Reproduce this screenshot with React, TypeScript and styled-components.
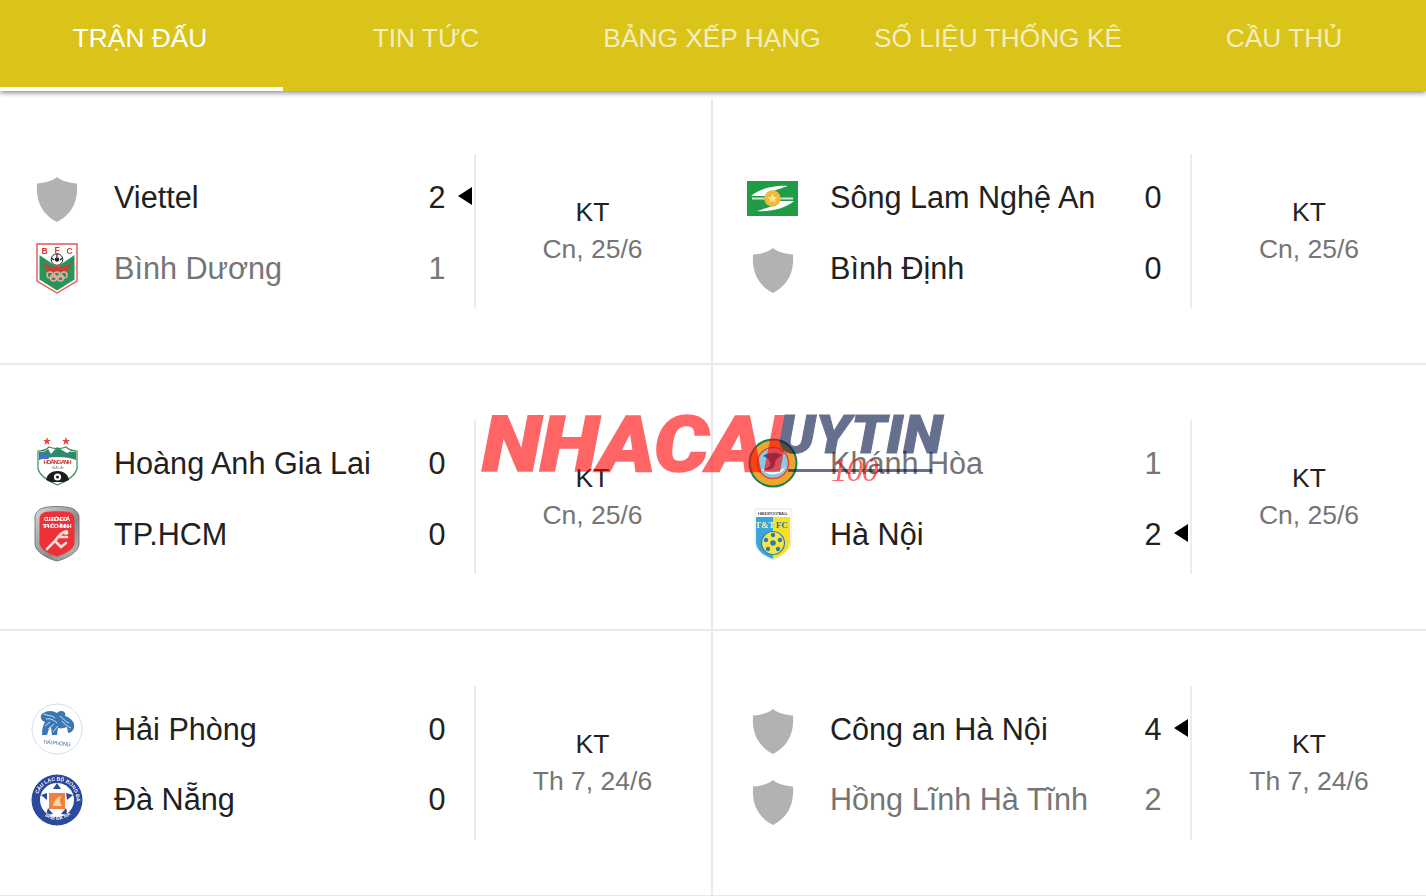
import React from "react";
import styled, { createGlobalStyle } from "styled-components";

const Global = createGlobalStyle`
  html, body { margin: 0; padding: 0; background: #fff; overflow: hidden; width: 1426px; height: 896px; }
  body { font-family: "Liberation Sans", Arial, sans-serif; color: #212121; }
  #root { position: relative; width: 1426px; height: 896px; overflow: hidden; }
`;

const TabBar = styled.nav`
  position: relative;
  z-index: 2;
  height: 91px;
  background: #dac41a;
  box-shadow: 0 2px 5px rgba(0, 0, 0, 0.45);
  overflow: hidden;
`;
const TabList = styled.div`
  display: grid;
  grid-template-columns: repeat(5, 286px);
  margin-left: -3px;
  height: 100%;
`;
const Tab = styled.div<{ $active?: boolean }>`
  display: flex;
  align-items: center;
  justify-content: center;
  box-sizing: border-box;
  padding-bottom: 10px;
  font-size: 26.3px;
  white-space: nowrap;
  color: ${(p) => (p.$active ? "#fff" : "rgba(255,255,255,0.72)")};
  border-bottom: 4px solid ${(p) => (p.$active ? "#fff" : "transparent")};
`;
const MatchGrid = styled.main`
  display: grid;
  grid-template-columns: 713px 713px;
  grid-auto-rows: 265.9px;
  padding-top: 8px;
`;
const MatchCell = styled.section<{ $right?: boolean }>`
  display: flex;
  box-sizing: border-box;
  padding-top: 55px;
  padding-left: ${(p) => (p.$right ? "3px" : "0")};
  border-bottom: 2px solid #e9e9e9;
  border-right: ${(p) => (p.$right ? "none" : "2px solid #e9e9e9")};
`;
const Teams = styled.div`
  box-sizing: border-box;
  flex: none;
  width: 476px;
  height: 154px;
  padding-top: 7.95px;
  border-right: 2px solid #ececec;
`;
const TeamRow = styled.div<{ $dim?: boolean }>`
  display: grid;
  grid-template-columns: 114px 306px 34px 20px;
  align-items: center;
  height: 70.8px;
  font-size: 30.6px;
  color: ${(p) => (p.$dim ? "#757575" : "#212121")};
`;
const LogoSlot = styled.div`
  display: flex;
  align-items: center;
  justify-content: center;
  height: 100%;
  svg {
    filter: blur(0.35px);
  }
`;
const ShieldMark = styled.svg`
  margin-top: 5px;
`;
const TeamName = styled.div`
  white-space: nowrap;
`;
const Score = styled.div`
  text-align: center;
`;
const WinMark = styled.div`
  justify-self: end;
  width: 0;
  height: 0;
  margin: 0 2px 3px 0;
  border-top: 9px solid transparent;
  border-bottom: 9px solid transparent;
  border-right: 14px solid #000;
`;
const Status = styled.div<{ $right?: boolean }>`
  flex: 1;
  display: flex;
  flex-direction: column;
  align-items: center;
  box-sizing: border-box;
  padding: 40px ${(p) => (p.$right ? "0" : "2px")} 0 0;
  font-size: 26.5px;
  line-height: 37px;
  color: #212121;
  white-space: nowrap;
`;
const DateText = styled.div`
  color: #757575;
`;
const Watermark = styled.div`
  position: absolute;
  left: 482px;
  top: 400px;
  width: 470px;
  height: 90px;
  opacity: 0.6;
  pointer-events: none;
  z-index: 3;
`;
const WmRed = styled.span`
  position: absolute;
  left: 0;
  top: 0;
  font-family: Roboto, "Liberation Sans", sans-serif;
  font-style: italic;
  font-weight: 900;
  font-size: 78px;
  line-height: 90px;
  color: #f00;
  -webkit-text-stroke: 1.5px #f00;
  transform: scaleX(1.11);
  transform-origin: left center;
  letter-spacing: -1px;
`;
const WmNavy = styled.span`
  position: absolute;
  left: 296px;
  top: 4px;
  font-family: Roboto, "Liberation Sans", sans-serif;
  font-style: italic;
  font-weight: 900;
  font-size: 53px;
  line-height: 62px;
  color: #014;
  -webkit-text-stroke: 1px #014;
  transform: scaleX(1.09);
  transform-origin: left center;
`;
const WmLine = styled.i`
  position: absolute;
  left: 306px;
  top: 69px;
  width: 144px;
  height: 3px;
  background: #014;
`;
const WmHundred = styled.span`
  position: absolute;
  left: 349px;
  top: 54px;
  font-family: "Liberation Serif", serif;
  font-style: italic;
  font-size: 33px;
  line-height: 33px;
  color: #f00;
  letter-spacing: -1px;
`;

const Shield = () => (
  <ShieldMark width="42" height="45" viewBox="0 0 42 45">
    <path d="M21 0C26 4 33 6 41 6.5C42 22 38 36 21 45C4 36 0 22 1 6.5C9 6 16 4 21 0Z" fill="#b2b2b2" />
  </ShieldMark>
);
const Bec = () => (
  <svg width="42" height="51" viewBox="0 0 42 51" style={{ marginTop: 1 }}>
    <path d="M1 1H41V38L21 50L1 38Z" fill="#fff" stroke="#e4574f" strokeWidth="1.4" />
    <path d="M3.5 12L21 24L38.5 12V36.5L21 47.5L3.5 36.5Z" fill="#2a9458" />
    <path d="M6 20L15 24L21 23L27 24L36 20L31 28L21 29L11 28Z" fill="#c8403a" />
    <g fill="none" stroke="#f0a9a0" strokeWidth="1.5">
      <circle cx="14" cy="32" r="3" />
      <circle cx="21" cy="32" r="3" />
      <circle cx="28" cy="32" r="3" />
      <circle cx="17.5" cy="35" r="3" />
      <circle cx="24.5" cy="35" r="3" />
    </g>
    <circle cx="21" cy="16.5" r="5.8" fill="#fff" stroke="#222" strokeWidth="1" />
    <circle cx="21" cy="16.5" r="2.2" fill="#222" />
    <path d="M15.5 15L18 17M26.5 15L24 17M21 11V14" stroke="#222" strokeWidth="1.2" />
    <text x="8.5" y="10.5" textAnchor="middle" fontFamily="Liberation Sans" fontWeight="700" fontSize="8.5" fill="#d7362f">B</text>
    <text x="21" y="10" textAnchor="middle" fontFamily="Liberation Sans" fontWeight="700" fontSize="8.5" fill="#d7362f">F</text>
    <text x="33.5" y="10.5" textAnchor="middle" fontFamily="Liberation Sans" fontWeight="700" fontSize="8.5" fill="#d7362f">C</text>
  </svg>
);
const Slna = () => (
  <svg width="51" height="35" viewBox="0 0 51 35" style={{ marginTop: 2, marginLeft: -2 }}>
    <rect width="51" height="35" fill="#1f9c45" />
    <path d="M4 15C13 7 29 4 41 5C32 8 23 10 18 15Z" fill="#fff" />
    <path d="M47 20C38 28 22 31 10 30C19 27 28 25 33 20Z" fill="#fff" />
    <rect x="5" y="16.5" width="41" height="2" fill="#cfe6d2" />
    <circle cx="25.5" cy="17.5" r="8.3" fill="#f0b93a" />
    <path d="M25.5 12.5L27 16H30.5L27.8 18.3L29 22L25.5 19.8L22 22L23.2 18.3L20.5 16H24Z" fill="#fbe58a" />
  </svg>
);
const Hagl = () => (
  <svg width="41" height="50" viewBox="0 0 41 50" style={{ marginTop: -4 }}>
    <path d="M10 1L11 4H14L11.6 5.8L12.5 9L10 7L7.5 9L8.4 5.8L6 4H9Z" fill="#e2463f" />
    <path d="M29 1L30 4H33L30.6 5.8L31.5 9L29 7L26.5 9L27.4 5.8L25 4H28Z" fill="#e2463f" />
    <path d="M1 15C6 15 9 14 12 11C17 13 24 13 29 11C32 14 35 15 40 15V33C38 40 30 45 20.5 49C11 45 3 40 1 33Z" fill="#fff" stroke="#3a8a58" strokeWidth="1.2" />
    <path d="M2 24V16C5 16 8 16 11 13L14 18L20 11L30 17L33 15.5C35 16 37 16 39 16V24C30 20 12 20 2 24Z" fill="#2f8a6a" />
    <path d="M3 17H10L12 23H3Z" fill="#3f74c4" />
    <text x="20.5" y="28" textAnchor="middle" fontFamily="Liberation Sans" fontWeight="700" fontSize="6" fill="#c9332f" textLength="28">HOÀNG ANH</text>
    <text x="20.5" y="33" textAnchor="middle" fontFamily="Liberation Sans" fontSize="3.6" fill="#777" textLength="12">GIA LAI</text>
    <path d="M9 44C10 38 15 35 20.5 35C26 35 31 38 32 44L27 46H14Z" fill="#1c1c1c" />
    <circle cx="20.5" cy="41" r="3.6" fill="#fff" />
    <circle cx="20.5" cy="41" r="1.5" fill="#1c1c1c" />
  </svg>
);
const Hcm = () => (
  <svg width="46" height="56" viewBox="0 0 46 56" style={{ marginTop: -1 }}>
    <defs>
      <linearGradient id="hcm-edge" x1="0" y1="0" x2="1" y2="1">
        <stop offset="0" stopColor="#d8d8d8" />
        <stop offset="0.6" stopColor="#8a8a8a" />
        <stop offset="1" stopColor="#c4c4c4" />
      </linearGradient>
    </defs>
    <path d="M9 2C16 0 30 0 37 2C41 3 45 7 45 11V38C45 46 32 53 23 55C14 53 1 46 1 38V11C1 7 5 3 9 2Z" fill="url(#hcm-edge)" stroke="#666" strokeWidth="0.8" />
    <path d="M11 6C17 5 29 5 35 6C38 7 40 9 40.5 12V37C40.5 43 30 48.5 23 50.5C16 48.5 5.5 43 5.5 37V12C6 9 8 7 11 6Z" fill="#ec3238" />
    <text x="23" y="14.5" textAnchor="middle" fontFamily="Liberation Sans" fontWeight="700" fontSize="5.6" fill="#fff" textLength="26">CLB BÓNG ĐÁ</text>
    <text x="23" y="21.5" textAnchor="middle" fontFamily="Liberation Sans" fontWeight="700" fontSize="5.6" fill="#fff" textLength="29">TP HỒ CHÍ MINH</text>
    <path d="M30 26C26 28 23 32 21 35L13 43M21 35L27 41L32 37M24 31L33 31" fill="none" stroke="#fbdcdc" strokeWidth="2.6" strokeLinecap="round" />
    <circle cx="32" cy="26.5" r="2.4" fill="#fbdcdc" />
  </svg>
);
const KhanhHoa = () => (
  <svg width="50" height="50" viewBox="0 0 50 50">
    <circle cx="25" cy="25" r="24.5" fill="#17805c" />
    <circle cx="25" cy="25" r="22.5" fill="#f0a62b" />
    <circle cx="25" cy="25" r="15.5" fill="#8cc8e0" stroke="#e2463f" strokeWidth="1.5" />
    <path d="M15 18C21 14 29 14 34 17C30 20 27 22 27 25C27 30 21 33 16 31C21 30 23 27 22 24C21 21 18 19 15 18Z" fill="#1d5aa5" />
    <path d="M13 30C20 36 30 36 37 29C34 38 18 39 13 30Z" fill="#fff" />
  </svg>
);
const HaNoi = () => (
  <svg width="38" height="53" viewBox="0 0 38 53">
    <path d="M1 1H37V34C37 43 28 49 19 52C10 49 1 43 1 34Z" fill="#fff" stroke="#e6e6e6" />
    <text x="19" y="7" textAnchor="middle" fontFamily="Liberation Sans" fontWeight="700" fontSize="4" fill="#555" textLength="30">HANOI FOOTBALL</text>
    <path d="M2 9H19V51C10 48 2 42 2 34Z" fill="#3aa6dc" />
    <path d="M19 9H36V34C36 42 28 48 19 51Z" fill="#f7df27" />
    <text x="11" y="20" textAnchor="middle" fontFamily="Liberation Serif" fontWeight="700" fontSize="9" fill="#fdf3a8">T&amp;T</text>
    <text x="28" y="20" textAnchor="middle" fontFamily="Liberation Serif" fontWeight="700" fontSize="9" fill="#2b6fa8">FC</text>
    <circle cx="19" cy="35" r="11.5" fill="#f7e34a" stroke="#2a7fae" strokeWidth="1.2" />
    <g fill="#2a7fae">
      <circle cx="19" cy="35" r="2.8" />
      <circle cx="19" cy="27" r="2.2" />
      <circle cx="12" cy="32" r="2.2" />
      <circle cx="26" cy="32" r="2.2" />
      <circle cx="14" cy="41" r="2.2" />
      <circle cx="24" cy="41" r="2.2" />
    </g>
  </svg>
);
const HaiPhong = () => (
  <svg width="52" height="52" viewBox="0 0 52 52">
    <circle cx="26" cy="26" r="25" fill="#fff" stroke="#d5dcee" />
    <path d="M10 12C14 7 22 7 26 10C30 6 36 9 34 13C38 14 42 17 43 21C44 27 40 30 37 30L36 24C33 25 30 26 27 25L26 32H21L20 24C18 25 17 29 16 32H11C11 26 12 22 14 19C11 18 9 15 10 12Z" fill="#3a78b5" />
    <path d="M13 11C17 13 21 12 24 15M15 16C19 15 23 17 26 20M29 13C32 15 34 19 38 20M31 18C33 21 36 23 40 25M14 23L19 19M17 26L23 21M22 29L27 23" fill="none" stroke="#cfe0f0" strokeWidth="1" />
    <text x="26" y="42" textAnchor="middle" fontFamily="Liberation Sans" fontSize="5.5" fill="#4a6d9c" textLength="27" transform="rotate(6 26 42)">HẢI PHÒNG</text>
  </svg>
);
const DaNang = () => (
  <svg width="52" height="52" viewBox="0 0 52 52">
    <circle cx="26" cy="26" r="25.5" fill="#2c4a9c" />
    <circle cx="26" cy="26" r="17" fill="#fff" />
    <path d="M26 9L30 15H22ZM42 21L36 26L35 19ZM10 21L16 19L16 26ZM15 41L17 34L22 40ZM37 41L30 40L35 34Z" fill="#2c4a9c" />
    <rect x="18" y="19" width="16" height="16" fill="#f0813a" />
    <path d="M22 32C23 27 25 24 30 22C28 26 29 29 31 32Z" fill="#fbd3a6" />
    <path id="dn-arc" d="M6.5 26A19.5 19.5 0 0 1 45.5 26" fill="none" />
    <text fontFamily="Liberation Sans" fontWeight="700" fontSize="5" fill="#fff"><textPath href="#dn-arc" startOffset="6">CÂU LẠC BỘ BÓNG ĐÁ</textPath></text>
    <path id="dn-arc2" d="M11 39A20 20 0 0 0 41 39" fill="none" />
    <text fontFamily="Liberation Sans" fontWeight="700" fontSize="5" fill="#fff"><textPath href="#dn-arc2" startOffset="4">SHB ĐÀ NẴNG</textPath></text>
  </svg>
);

type Side = { name: string; score: number; logo: React.ReactNode; dim?: boolean; win?: boolean };
type Match = { date: string; a: Side; b: Side };

const matches: Match[] = [
  { date: "Cn, 25/6", a: { name: "Viettel", score: 2, logo: <Shield />, win: true }, b: { name: "Bình Dương", score: 1, logo: <Bec />, dim: true } },
  { date: "Cn, 25/6", a: { name: "Sông Lam Nghệ An", score: 0, logo: <Slna /> }, b: { name: "Bình Định", score: 0, logo: <Shield /> } },
  { date: "Cn, 25/6", a: { name: "Hoàng Anh Gia Lai", score: 0, logo: <Hagl /> }, b: { name: "TP.HCM", score: 0, logo: <Hcm /> } },
  { date: "Cn, 25/6", a: { name: "Khánh Hòa", score: 1, logo: <KhanhHoa />, dim: true }, b: { name: "Hà Nội", score: 2, logo: <HaNoi />, win: true } },
  { date: "Th 7, 24/6", a: { name: "Hải Phòng", score: 0, logo: <HaiPhong /> }, b: { name: "Đà Nẵng", score: 0, logo: <DaNang /> } },
  { date: "Th 7, 24/6", a: { name: "Công an Hà Nội", score: 4, logo: <Shield />, win: true }, b: { name: "Hồng Lĩnh Hà Tĩnh", score: 2, logo: <Shield />, dim: true } },
];

const tabs = ["TRẬN ĐẤU", "TIN TỨC", "BẢNG XẾP HẠNG", "SỐ LIỆU THỐNG KÊ", "CẦU THỦ"];

const Team = ({ side }: { side: Side }) => (
  <TeamRow $dim={side.dim}>
    <LogoSlot>{side.logo}</LogoSlot>
    <TeamName>{side.name}</TeamName>
    <Score>{side.score}</Score>
    {side.win ? <WinMark /> : null}
  </TeamRow>
);

export default function App() {
  return (
    <>
      <Global />
      <TabBar>
        <TabList>
          {tabs.map((t, i) => (
            <Tab key={t} $active={i === 0}>{t}</Tab>
          ))}
        </TabList>
      </TabBar>
      <MatchGrid>
        {matches.map((m, i) => (
          <MatchCell key={m.a.name} $right={i % 2 === 1}>
            <Teams>
              <Team side={m.a} />
              <Team side={m.b} />
            </Teams>
            <Status $right={i % 2 === 1}>
              <div>KT</div>
              <DateText>{m.date}</DateText>
            </Status>
          </MatchCell>
        ))}
      </MatchGrid>
      <Watermark>
        <WmRed>NHACAI</WmRed>
        <WmNavy>UYTIN</WmNavy>
        <WmLine />
        <WmHundred>100</WmHundred>
      </Watermark>
    </>
  );
}
